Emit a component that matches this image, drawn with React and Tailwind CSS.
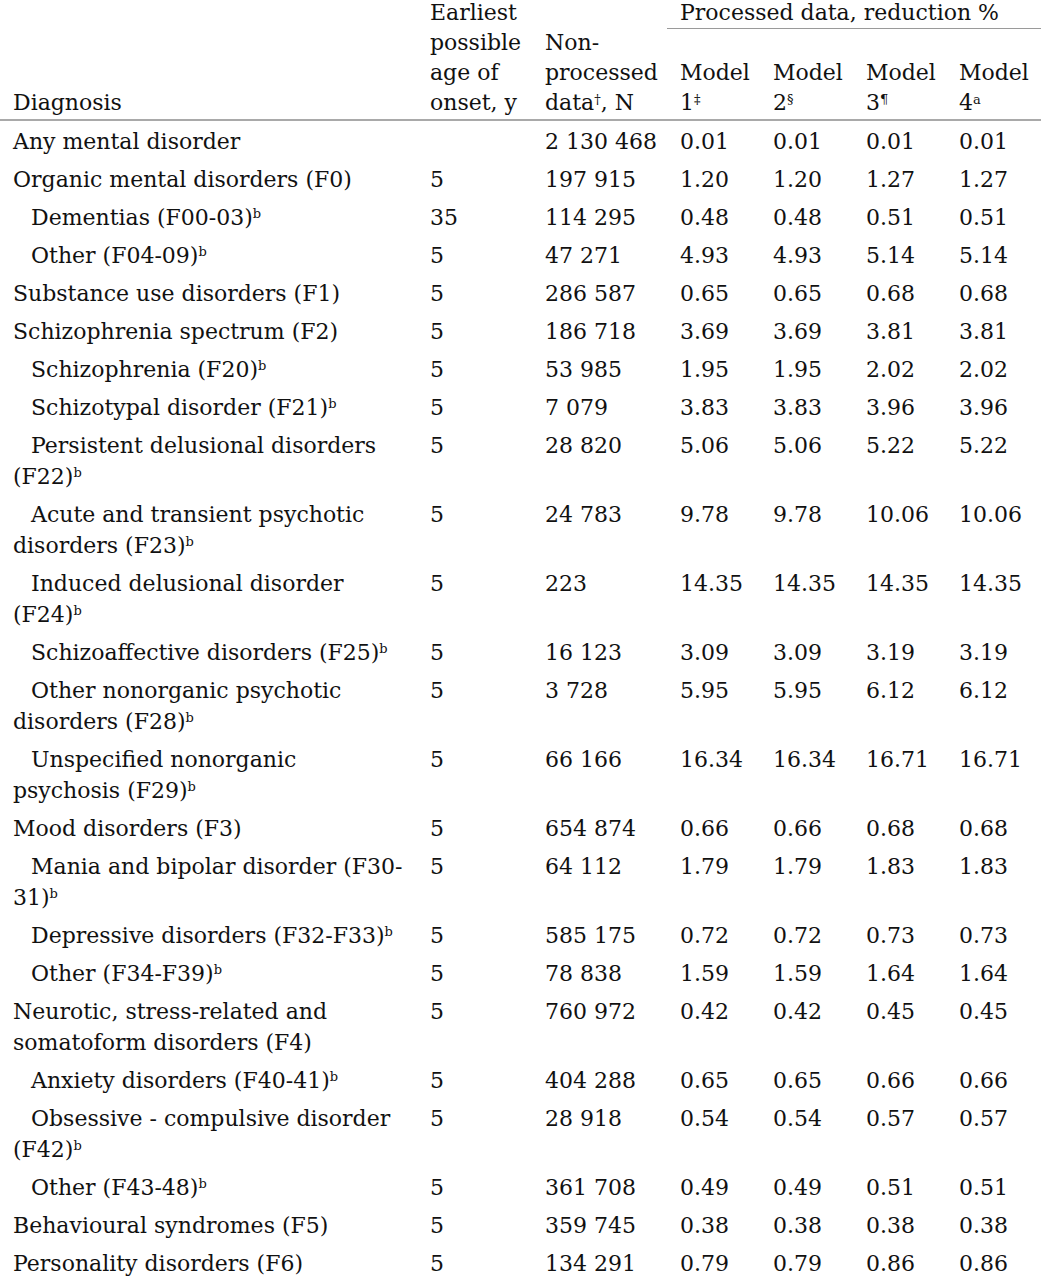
import React from "react";

// Reduction in diagnoses after processing, by ICD-10 chapter
const rows = [
  { lines: ["Any mental disorder"], age: "", n: "2 130 468", m: ["0.01", "0.01", "0.01", "0.01"] },
  { lines: ["Organic mental disorders (F0)"], age: "5", n: "197 915", m: ["1.20", "1.20", "1.27", "1.27"] },
  { sub: true, lines: ["Dementias (F00-03)"], age: "35", n: "114 295", m: ["0.48", "0.48", "0.51", "0.51"] },
  { sub: true, lines: ["Other (F04-09)"], age: "5", n: "47 271", m: ["4.93", "4.93", "5.14", "5.14"] },
  { lines: ["Substance use disorders (F1)"], age: "5", n: "286 587", m: ["0.65", "0.65", "0.68", "0.68"] },
  { lines: ["Schizophrenia spectrum (F2)"], age: "5", n: "186 718", m: ["3.69", "3.69", "3.81", "3.81"] },
  { sub: true, lines: ["Schizophrenia (F20)"], age: "5", n: "53 985", m: ["1.95", "1.95", "2.02", "2.02"] },
  { sub: true, lines: ["Schizotypal disorder (F21)"], age: "5", n: "7 079", m: ["3.83", "3.83", "3.96", "3.96"] },
  { sub: true, lines: ["Persistent delusional disorders", "(F22)"], age: "5", n: "28 820", m: ["5.06", "5.06", "5.22", "5.22"] },
  { sub: true, lines: ["Acute and transient psychotic", "disorders (F23)"], age: "5", n: "24 783", m: ["9.78", "9.78", "10.06", "10.06"] },
  { sub: true, lines: ["Induced delusional disorder", "(F24)"], age: "5", n: "223", m: ["14.35", "14.35", "14.35", "14.35"] },
  { sub: true, lines: ["Schizoaffective disorders (F25)"], age: "5", n: "16 123", m: ["3.09", "3.09", "3.19", "3.19"] },
  { sub: true, lines: ["Other nonorganic psychotic", "disorders (F28)"], age: "5", n: "3 728", m: ["5.95", "5.95", "6.12", "6.12"] },
  { sub: true, lines: ["Unspecified nonorganic", "psychosis (F29)"], age: "5", n: "66 166", m: ["16.34", "16.34", "16.71", "16.71"] },
  { lines: ["Mood disorders (F3)"], age: "5", n: "654 874", m: ["0.66", "0.66", "0.68", "0.68"] },
  { sub: true, lines: ["Mania and bipolar disorder (F30-", "31)"], age: "5", n: "64 112", m: ["1.79", "1.79", "1.83", "1.83"] },
  { sub: true, lines: ["Depressive disorders (F32-F33)"], age: "5", n: "585 175", m: ["0.72", "0.72", "0.73", "0.73"] },
  { sub: true, lines: ["Other (F34-F39)"], age: "5", n: "78 838", m: ["1.59", "1.59", "1.64", "1.64"] },
  { lines: ["Neurotic, stress-related and", "somatoform disorders (F4)"], age: "5", n: "760 972", m: ["0.42", "0.42", "0.45", "0.45"] },
  { sub: true, lines: ["Anxiety disorders (F40-41)"], age: "5", n: "404 288", m: ["0.65", "0.65", "0.66", "0.66"] },
  { sub: true, lines: ["Obsessive - compulsive disorder", "(F42)"], age: "5", n: "28 918", m: ["0.54", "0.54", "0.57", "0.57"] },
  { sub: true, lines: ["Other (F43-48)"], age: "5", n: "361 708", m: ["0.49", "0.49", "0.51", "0.51"] },
  { lines: ["Behavioural syndromes (F5)"], age: "5", n: "359 745", m: ["0.38", "0.38", "0.38", "0.38"] },
  { lines: ["Personality disorders (F6)"], age: "5", n: "134 291", m: ["0.79", "0.79", "0.86", "0.86"] },
];

const cols = "grid grid-cols-[417px_115px_135px_93px_93px_93px_1fr]";

function Sup({ children }) {
  return <sup className="text-[13px]">{children}</sup>;
}

function Diagnosis({ row }) {
  return (
    <div className={`pl-[13px] whitespace-nowrap ${row.sub ? "indent-[18px]" : ""}`}>
      {row.lines.map((line, i) => (
        <React.Fragment key={i}>
          {i > 0 && <br />}
          {line}
        </React.Fragment>
      ))}
      {row.sub && <Sup>b</Sup>}
    </div>
  );
}

export default function App() {
  return (
    <div
      className="w-[1041px] h-[1280px] overflow-hidden bg-white text-[#111] text-[22px]"
      style={{ fontFamily: '"DejaVu Serif", "Liberation Serif", serif' }}
    >
      {/* Header */}
      <div className={`${cols} grid-rows-[31px_90px] -mt-[2px] border-b-2 border-[#a9a9a9] leading-[30px]`}>
        <div className="row-span-2 self-end pl-[13px] pb-[1px]">Diagnosis</div>
        <div className="row-span-2 self-end pl-[13px] pb-[1px]">
          Earliest
          <br />
          possible
          <br />
          age of
          <br />
          onset, y
        </div>
        <div className="row-span-2 self-end pl-[13px] pb-[1px]">
          Non-
          <br />
          processed
          <br />
          data<Sup>†</Sup>, N
        </div>
        <div className="col-span-4 pl-[13px] border-b border-[#9a9a9a] whitespace-nowrap">
          Processed data, reduction %
        </div>
        {["‡", "§", "¶", "a"].map((s, i) => (
          <div key={i} className="self-end pl-[13px] pb-[1px]">
            Model
            <br />
            {i + 1}
            <Sup>{s}</Sup>
          </div>
        ))}
      </div>

      {/* Body */}
      <div className="pt-[1px]">
        {rows.map((row, i) => (
          <div key={i} className={`${cols} leading-[31px] py-[3.5px]`}>
            <Diagnosis row={row} />
            <div className="pl-[13px]">{row.age}</div>
            <div className="pl-[13px] whitespace-nowrap">{row.n}</div>
            {row.m.map((v, j) => (
              <div key={j} className="pl-[13px]">
                {v}
              </div>
            ))}
          </div>
        ))}
      </div>
    </div>
  );
}
